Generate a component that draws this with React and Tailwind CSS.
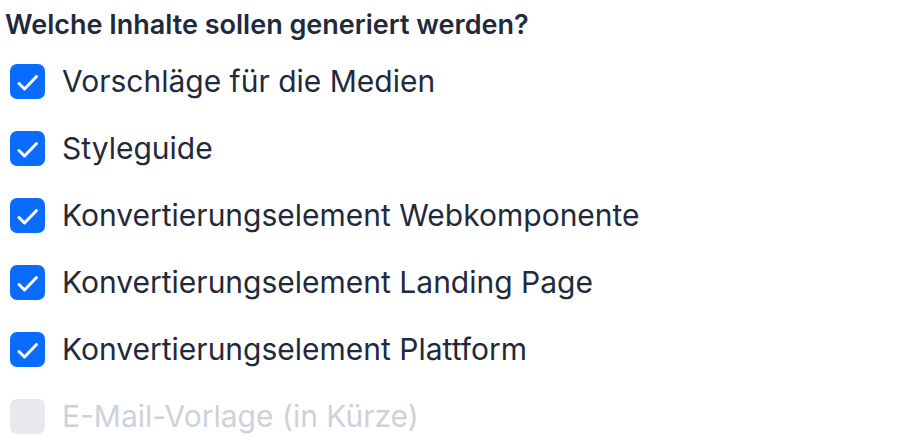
import React from "react";

const items = [
  { label: "Vorschläge für die Medien", checked: true },
  { label: "Styleguide", checked: true },
  { label: "Konvertierungselement Webkomponente", checked: true },
  { label: "Konvertierungselement Landing Page", checked: true },
  { label: "Konvertierungselement Plattform", checked: true },
  { label: "E-Mail-Vorlage (in Kürze)", checked: false, disabled: true },
];

function Box({ checked, disabled }) {
  if (disabled) {
    return <span className="w-[35px] h-[35px] rounded-[7px] bg-[#e7e9ed] shrink-0" />;
  }
  return (
    <span className="w-[35px] h-[35px] rounded-[7px] bg-[#0a6cff] shrink-0 flex">
      {checked && (
        <svg width="35" height="35" viewBox="0 0 35 35" fill="none" stroke="white" strokeWidth="3" strokeLinecap="round" strokeLinejoin="round">
          <path d="M9 19.5l5.5 5.5 12-12.5" />
        </svg>
      )}
    </span>
  );
}

export default function App() {
  return (
    <div className="w-[900px] h-[440px] bg-white overflow-hidden font-['Inter',sans-serif] pl-[5px]">
      <h2 className="text-[27px] leading-[48px] font-semibold text-[#1f2a3c] mt-[1px]">
        Welche Inhalte sollen generiert werden?
      </h2>
      <div className="flex flex-col gap-[32px] pl-[5px] mt-[15px]">
        {items.map((it) => (
          <label key={it.label} className="flex items-center gap-[17px] h-[35px]">
            <Box checked={it.checked} disabled={it.disabled} />
            <span className={`text-[30px] leading-[35px] ${it.disabled ? "text-[#cdd2da]" : "text-[#1f2a3c]"}`}>
              {it.label}
            </span>
          </label>
        ))}
      </div>
    </div>
  );
}
